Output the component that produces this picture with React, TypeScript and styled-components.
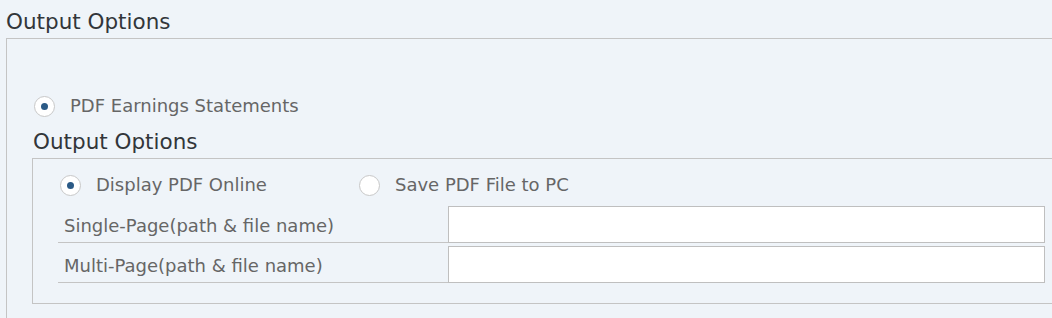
import React from "react";
import styled, { createGlobalStyle } from "styled-components";

const Global = createGlobalStyle`
  html, body { margin: 0; padding: 0; background: #eff4f9; }
  body { font-family: "DejaVu Sans", "Open Sans", sans-serif; overflow: hidden; }
`;

const Page = styled.div`
  width: 1052px;
  height: 318px;
  padding-top: 7px;
  box-sizing: border-box;
  background: #eff4f9;
  overflow: hidden;
`;

const Title = styled.div<{ $indent: number }>`
  font-size: 21.5px;
  color: #32363a;
  line-height: 30px;
  height: 30px;
  padding-left: ${(p) => p.$indent}px;
`;

const Panel = styled.div`
  margin: 1px 0 0 6px;
  border-top: 1px solid #c4c4c4;
  border-left: 1px solid #c4c4c4;
  padding: 56px 0 0 25px;
  height: 400px;
`;

const RadioRow = styled.div<{ $indent?: number }>`
  display: flex;
  align-items: center;
  height: 22px;
  margin-left: ${(p) => p.$indent ?? 0}px;
`;

const RadioItem = styled.label<{ $width?: number }>`
  display: flex;
  align-items: center;
  gap: 15px;
  width: ${(p) => (p.$width ? `${p.$width}px` : "auto")};
  font-size: 18px;
  line-height: 22px;
  color: #666666;
`;

const Circle = styled.span<{ $checked?: boolean }>`
  box-sizing: border-box;
  width: 21px;
  height: 21px;
  border-radius: 50%;
  border: 1px solid #c8c8c8;
  background: #ffffff;
  display: flex;
  align-items: center;
  justify-content: center;
  flex: none;
  &::after {
    content: "";
    width: 7px;
    height: 7px;
    border-radius: 50%;
    background: ${(p) => (p.$checked ? "#2b5a86" : "transparent")};
  }
`;

const SubTitleWrap = styled.div`
  margin: 10px 0 0 1px;
`;

const Group = styled.div`
  margin-top: 1px;
  border-top: 1px solid #c4c4c4;
  border-left: 1px solid #c4c4c4;
  border-bottom: 1px solid #c4c4c4;
  padding: 15px 8px 20px 27px;
  display: flex;
  flex-direction: column;
`;

const Rows = styled.div`
  margin-top: 10px;
  margin-left: -2px;
  display: flex;
  flex-direction: column;
  gap: 3px;
`;

const Row = styled.div`
  display: grid;
  grid-template-columns: 390px 1fr;
  height: 37px;
`;

const Label = styled.div`
  box-sizing: border-box;
  border-bottom: 1px solid #c4c4c4;
  font-size: 18px;
  line-height: 21px;
  color: #666666;
  padding: 9px 0 0 6px;
`;

const Input = styled.input`
  box-sizing: border-box;
  height: 37px;
  width: 597px;
  border: 1px solid #bfbfbf;
  background: #ffffff;
  margin: 0;
  padding: 0 8px;
  outline: none;
`;

export default function App() {
  return (
    <Page>
      <Global />
      <Title $indent={6}>Output Options</Title>
      <Panel>
        <RadioRow $indent={2}>
          <RadioItem>
            <Circle $checked />
            PDF Earnings Statements
          </RadioItem>
        </RadioRow>
        <SubTitleWrap>
          <Title $indent={0}>Output Options</Title>
        </SubTitleWrap>
        <Group>
          <RadioRow>
            <RadioItem $width={299}>
              <Circle $checked />
              Display PDF Online
            </RadioItem>
            <RadioItem>
              <Circle />
              Save PDF File to PC
            </RadioItem>
          </RadioRow>
          <Rows>
            <Row>
              <Label>Single-Page(path &amp; file name)</Label>
              <Input />
            </Row>
            <Row>
              <Label>Multi-Page(path &amp; file name)</Label>
              <Input />
            </Row>
          </Rows>
        </Group>
      </Panel>
    </Page>
  );
}
